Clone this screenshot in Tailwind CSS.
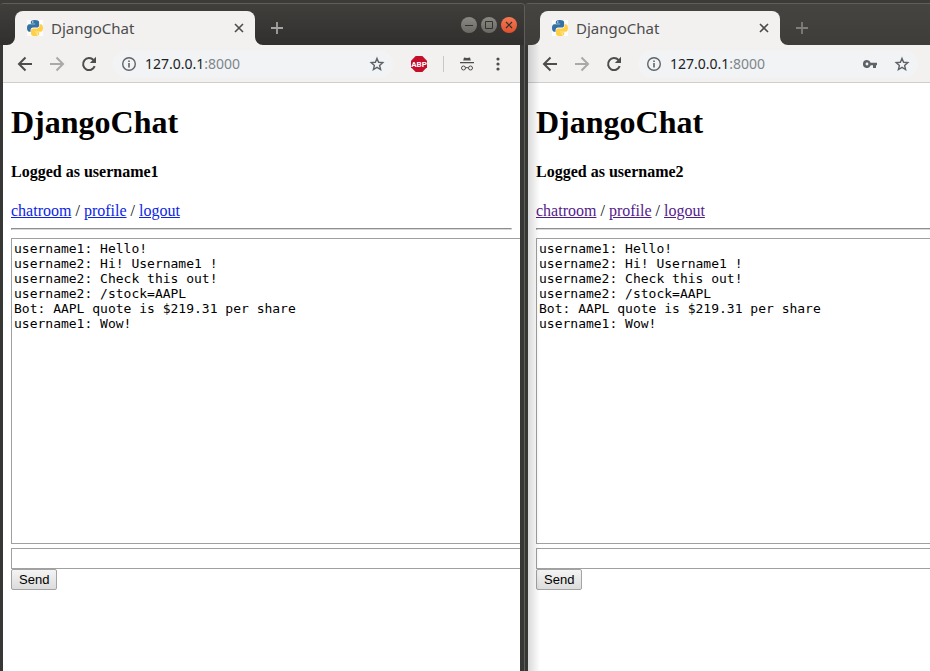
<!DOCTYPE html>
<html lang="en">
<head>
<meta charset="utf-8">
<meta name="viewport" content="width=device-width, initial-scale=1">
<title>DjangoChat</title>
<script src="https://cdn.jsdelivr.net/npm/@tailwindcss/browser@4"></script>
</head>
<body class="bg-[#3c3b37] text-black">
<svg class="hidden" aria-hidden="true">
  <symbol id="python" viewBox="0 0 16 16">
    <path fill="#fff" fill-opacity=".8" d="M0 0h16v16H0z"/>
    <path fill="#3571a3" fill-rule="evenodd" d="M7.900 0C5.200 0 3.800.8 3.800 2.300V3.700h4.400v.5H2.300C.8 4.200 0 5.600 0 8c0 2.400.9 3.800 2.200 3.800h1.400V10c0-1.500 1.100-2.400 2.400-2.400h3.900c1.200 0 2.200-1 2.200-2.200V2.300C12.100.8 10.600 0 7.900 0zM5.800 1.300a.7.7 0 1 1 0 1.400.7.7 0 0 1 0-1.400z"/>
    <path fill="#ffcf45" fill-rule="evenodd" d="M8.100 16c2.700 0 4.100-.8 4.100-2.300V12.300H7.800v-.5h5.900C15.200 11.800 16 10.400 16 8c0-2.400-.9-3.800-2.200-3.800h-1.300V6c0 1.500-1.100 2.400-2.400 2.400H6.200c-1.200 0-2.200 1-2.200 2.200v3.100C4 15.200 5.400 16 8.100 16zm2.100-1.300a.7.7 0 1 1 0-1.400.7.7 0 0 1 0 1.400z"/>
  </symbol>
  <symbol id="close" viewBox="0 0 10 10"><path d="M1 1l8 8M9 1L1 9" stroke="currentColor" stroke-width="1.600" fill="none"/></symbol>
  <symbol id="plus" viewBox="0 0 12 12"><path d="M6 0v12M0 6h12" stroke="currentColor" stroke-width="1.800" fill="none"/></symbol>
  <symbol id="back" viewBox="0 0 16 16"><path d="M15 8H2.500M8.500 1.500L2 8l6.500 6.500" stroke="currentColor" stroke-width="2" fill="none"/></symbol>
  <symbol id="forward" viewBox="0 0 16 16"><path d="M1 8h12.500M7.500 1.500L14 8l-6.500 6.500" stroke="currentColor" stroke-width="2" fill="none"/></symbol>
  <symbol id="reload" viewBox="0 0 16 16"><path d="M13.700 10.200A6 6 0 1 1 12.500 4" stroke="currentColor" stroke-width="2" fill="none"/><path d="M15 .8V7H8.800z" fill="currentColor"/></symbol>
  <symbol id="info" viewBox="0 0 16 16"><circle cx="8" cy="8" r="6.300" stroke="currentColor" stroke-width="1.400" fill="none"/><path d="M7.200 7h1.600v4.500H7.200zM7.200 4.500h1.600V6H7.200z" fill="currentColor"/></symbol>
  <symbol id="star" viewBox="0 0 16 16"><path d="M8 2.400l1.600 3.900 4.200.3-3.200 2.800 1 4.100L8 11.300l-3.600 2.200 1-4.100-3.200-2.800 4.200-.3z" stroke="currentColor" stroke-width="1.400" fill="none"/></symbol>
  <symbol id="key" viewBox="0 0 14 8"><path fill-rule="evenodd" fill="currentColor" d="M4 0a4 4 0 0 1 3.700 2.700H14v2.600h-1V8h-3V5.300H7.700A4 4 0 1 1 4 0zm0 2.600a1.400 1.400 0 1 0 0 2.800 1.400 1.400 0 0 0 0-2.800z"/></symbol>
  <symbol id="incognito" viewBox="0 0 14 14"><path fill="currentColor" d="M4 .5l3 .5 3-.5.8 3H3.200zM0 5h14v1.200H0z"/><path d="M5.500 11q1.500-1 3 0" stroke="currentColor" fill="none"/><circle cx="3.500" cy="11" r="2" stroke="currentColor" fill="none"/><circle cx="10.500" cy="11" r="2" stroke="currentColor" fill="none"/></symbol>
  <symbol id="dots" viewBox="0 0 4 14"><g fill="currentColor"><circle cx="2" cy="2" r="1.600"/><circle cx="2" cy="7" r="1.600"/><circle cx="2" cy="12" r="1.600"/></g></symbol>
  <symbol id="foot" viewBox="0 0 8 8"><path d="M8 0v8H0a8 8 0 0 0 8-8z" fill="#f2f1f0"/></symbol>
</svg>

<main class="grid min-h-screen grid-cols-[525fr_405fr] overflow-hidden pt-[3px]">

  <section class="flex min-w-0 flex-col overflow-hidden rounded-t border-t border-r border-[#5f5e5a] bg-[#373735]" aria-label="First browser window">
    <header class="flex h-[41px] shrink-0 items-end bg-linear-to-b from-[#403f3c] to-[#302f2d] pr-[7px] pl-[15px]">
      <div class="relative flex h-[34px] w-60 items-center rounded-t-lg bg-[#f2f1f0] pr-[11px] pl-3 font-['Noto_Sans',sans-serif] text-[15px] text-[#4c4c4c]">
        <svg class="absolute bottom-0 -left-2 size-2"><use href="#foot"/></svg>
        <svg class="absolute -right-2 bottom-0 size-2 -scale-x-100"><use href="#foot"/></svg>
        <svg class="mr-2 size-4"><use href="#python"/></svg>
        <span class="flex-1">DjangoChat</span>
        <button aria-label="Close tab"><svg class="size-[10px]"><use href="#close"/></svg></button>
      </div>
      <button class="ml-4 flex h-[34px] items-center text-[#a5a4a2]" aria-label="New tab"><svg class="size-3"><use href="#plus"/></svg></button>
      <div class="ml-auto flex gap-1 self-center text-[#33322f]">
        <button aria-label="Minimize" class="size-4 rounded-full bg-linear-to-b from-[#8a8982] to-[#6a6963]"><svg viewBox="0 0 16 16"><path d="M4 8.500h8" stroke="currentColor"/></svg></button>
        <button aria-label="Maximize" class="size-4 rounded-full bg-linear-to-b from-[#8a8982] to-[#6a6963]"><svg viewBox="0 0 16 16"><path d="M4.500 4.500h7v7h-7z" fill="none" stroke="currentColor"/></svg></button>
        <button aria-label="Close window" class="size-4 rounded-full bg-linear-to-b from-[#f47a55] to-[#e0502c]"><svg viewBox="0 0 16 16"><path d="M5 5l6 6M11 5l-6 6" stroke="currentColor" stroke-width="1.200"/></svg></button>
      </div>
    </header>
    <div class="mr-1 ml-[3px] flex flex-1 flex-col overflow-hidden bg-white">
      <nav class="flex h-[38px] shrink-0 items-center border-b border-[#cfcecd] bg-[#f2f1f0] pr-5 pl-[14px] text-[#4d4d4d]">
        <button aria-label="Back"><svg class="size-4"><use href="#back"/></svg></button>
        <button aria-label="Forward" class="ml-4 text-[#aaa9a8]"><svg class="size-4"><use href="#forward"/></svg></button>
        <button aria-label="Reload" class="ml-4"><svg class="size-4"><use href="#reload"/></svg></button>
        <div class="ml-4 flex h-7 flex-1 items-center rounded-full bg-[#f1f3f5] px-2 font-['Noto_Sans',sans-serif] text-sm text-[#5f6368]">
          <svg class="mr-2 size-4"><use href="#info"/></svg>
          <span class="text-[#202124]">127.0.0.1</span><span class="flex-1 text-[#80868b]">:8000</span>
          <button aria-label="Bookmark"><svg class="size-4"><use href="#star"/></svg></button>
        </div>
        <button aria-label="AdBlock Plus" class="ml-[18px]"><svg class="size-4" viewBox="0 0 16 16"><path d="M4.700 0h6.600L16 4.700v6.600L11.300 16H4.700L0 11.300V4.700z" fill="#c70d2c"/><text x="8" y="11" text-anchor="middle" font-family="Roboto, sans-serif" font-size="8" font-weight="bold" fill="#fff">ABP</text></svg></button>
        <span class="mx-4 h-4 w-px bg-[#c9c8c8]"></span>
        <svg class="size-[14px]"><use href="#incognito"/></svg>
        <button aria-label="Menu" class="ml-[22px]"><svg class="h-[14px] w-1"><use href="#dots"/></svg></button>
      </nav>
      <div class="p-2 pt-5 font-['Liberation_Serif',serif] text-base leading-[18px]">
        <h1 class="text-[32px] leading-[38px] font-bold">DjangoChat</h1>
        <h4 class="mt-[22px] font-bold">Logged as username1</h4>
        <p class="mt-[21px]"><a href="#" class="text-[#0b24e6] underline">chatroom</a> / <a href="#" class="text-[#0b24e6] underline">profile</a> / <a href="#" class="text-[#0b24e6] underline">logout</a></p>
        <hr class="my-2 h-[2px] border border-t-[#8e8e8e] border-r-[#e5e5e5] border-b-[#d8d8d8] border-l-[#8e8e8e]">
        <form class="flex flex-col items-start">
          <textarea aria-label="Chat log" rows="20" cols="100" class="mb-1 shrink-0 resize-none overflow-hidden border border-[#a0a0a0] bg-white p-[2px] font-['DejaVu_Sans_Mono',monospace] text-[13px] leading-[15px]">username1: Hello!
username2: Hi! Username1 !
username2: Check this out!
username2: /stock=AAPL
Bot: AAPL quote is $219.31 per share
username1: Wow!</textarea>
          <input aria-label="Message" type="text" size="100" class="h-[21px] border border-[#a0a0a0] bg-white px-[2px] font-['Liberation_Sans',sans-serif] text-[13px]">
          <button type="button" class="h-[21px] rounded-xs border border-[#a3a3a3] bg-linear-to-b from-[#f4f4f4] to-[#dcdcdc] px-[7px] font-['Liberation_Sans',sans-serif] text-[13px] leading-[19px]">Send</button>
        </form>
      </div>
    </div>
  </section>

  <section class="flex min-w-0 flex-col overflow-hidden rounded-tl border-t border-[#5f5e5a] bg-[#373735]" aria-label="Second browser window">
    <header class="flex h-[41px] shrink-0 items-end bg-linear-to-b from-[#454440] to-[#3e3d39] pl-[15px]">
      <div class="relative flex h-[34px] w-60 items-center rounded-t-lg bg-[#f2f1f0] pr-[11px] pl-3 font-['Noto_Sans',sans-serif] text-[15px] text-[#4c4c4c]">
        <svg class="absolute bottom-0 -left-2 size-2"><use href="#foot"/></svg>
        <svg class="absolute -right-2 bottom-0 size-2 -scale-x-100"><use href="#foot"/></svg>
        <svg class="mr-2 size-4"><use href="#python"/></svg>
        <span class="flex-1">DjangoChat</span>
        <button aria-label="Close tab"><svg class="size-[10px]"><use href="#close"/></svg></button>
      </div>
      <button class="ml-4 flex h-[34px] items-center text-[#7f7e7b]" aria-label="New tab"><svg class="size-3"><use href="#plus"/></svg></button>
    </header>
    <div class="relative ml-[3px] flex flex-1 flex-col overflow-hidden bg-white">
      <div class="pointer-events-none absolute inset-y-0 left-0 w-3 bg-linear-to-r from-black/15 to-transparent"></div>
      <nav class="flex h-[38px] shrink-0 items-center border-b border-[#cfcecd] bg-[#f2f1f0] pr-3 pl-[14px] text-[#4d4d4d]">
        <button aria-label="Back"><svg class="size-4"><use href="#back"/></svg></button>
        <button aria-label="Forward" class="ml-4 text-[#aaa9a8]"><svg class="size-4"><use href="#forward"/></svg></button>
        <button aria-label="Reload" class="ml-4"><svg class="size-4"><use href="#reload"/></svg></button>
        <div class="ml-4 flex h-7 flex-1 items-center rounded-full bg-[#f1f3f5] px-2 font-['Noto_Sans',sans-serif] text-sm text-[#5f6368]">
          <svg class="mr-2 size-4"><use href="#info"/></svg>
          <span class="text-[#202124]">127.0.0.1</span><span class="flex-1 text-[#80868b]">:8000</span>
          <button aria-label="Saved passwords" class="mr-[17px]"><svg class="h-2 w-[14px]"><use href="#key"/></svg></button>
          <button aria-label="Bookmark"><svg class="size-4"><use href="#star"/></svg></button>
        </div>
      </nav>
      <div class="p-2 pr-0 pt-5 font-['Liberation_Serif',serif] text-base leading-[18px]">
        <h1 class="text-[32px] leading-[38px] font-bold">DjangoChat</h1>
        <h4 class="mt-[22px] font-bold">Logged as username2</h4>
        <p class="mt-[21px]"><a href="#" class="text-[#551a8b] underline">chatroom</a> / <a href="#" class="text-[#551a8b] underline">profile</a> / <a href="#" class="text-[#551a8b] underline">logout</a></p>
        <hr class="my-2 h-[2px] border border-r-0 border-t-[#8e8e8e] border-b-[#d8d8d8] border-l-[#8e8e8e]">
        <form class="flex flex-col items-start">
          <textarea aria-label="Chat log" rows="20" cols="100" class="mb-1 shrink-0 resize-none overflow-hidden border border-[#a0a0a0] bg-white p-[2px] font-['DejaVu_Sans_Mono',monospace] text-[13px] leading-[15px]">username1: Hello!
username2: Hi! Username1 !
username2: Check this out!
username2: /stock=AAPL
Bot: AAPL quote is $219.31 per share
username1: Wow!</textarea>
          <input aria-label="Message" type="text" size="100" class="h-[21px] border border-[#a0a0a0] bg-white px-[2px] font-['Liberation_Sans',sans-serif] text-[13px]">
          <button type="button" class="h-[21px] rounded-xs border border-[#a3a3a3] bg-linear-to-b from-[#f4f4f4] to-[#dcdcdc] px-[7px] font-['Liberation_Sans',sans-serif] text-[13px] leading-[19px]">Send</button>
        </form>
      </div>
    </div>
  </section>
</main>
</body>
</html>
